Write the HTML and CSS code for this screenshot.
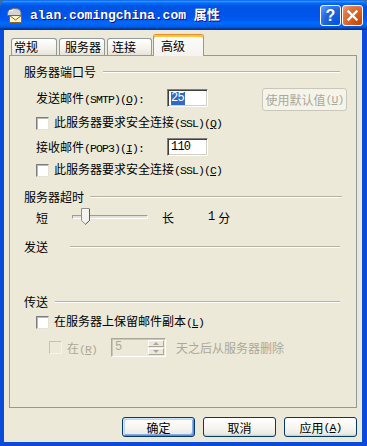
FILE: index.html
```html
<!DOCTYPE html>
<html>
<head>
<meta charset="utf-8">
<link rel="stylesheet" href="styles.css">
</head>
<body>
<div class="win">
  <div class="titlebar">
    <svg class="appicon" width="17" height="17" viewBox="0 0 17 17">
      <path d="M1.5 8.5 Q1 3 5 2.5 Q7 0.5 10 1.5 Q14.5 1.5 15 5.5 L15 8.5 Z" fill="#D4D4D4" stroke="#6E6E6E"/>
      <path d="M3 4 Q5 3 7 3.5" fill="none" stroke="#FFFFFF"/>
      <rect x="3.5" y="8.5" width="12" height="7" fill="#FFF4C8" stroke="#8A6326"/>
      <path d="M3.5 8.5 L9.5 13 L15.5 8.5" fill="none" stroke="#8A6326"/>
    </svg>
    <span class="title"><span class="tmono">alan.comingchina.com </span>属性</span>
    <div class="tbtns">
      <div class="tb help">?</div>
      <div class="tb close">
        <svg width="13" height="13" viewBox="0 0 13 13"><path d="M2.5 2.5 L10.5 10.5 M10.5 2.5 L2.5 10.5" stroke="#fff" stroke-width="2.4" stroke-linecap="square"/></svg>
      </div>
    </div>
  </div>
  <div class="body">
    <div class="tabs">
      <div class="tab t1">常规</div>
      <div class="tab t2">服务器</div>
      <div class="tab t3">连接</div>
      <div class="tab sel">高级</div>
    </div>
    <div class="panel">
      <div class="hdr hd1"><span>服务器端口号</span><i class="line"></i></div>

      <div class="frow r-smtp">
        <span class="flabel">发送邮件<span class="l">(SMTP)(<u>O</u>):</span></span>
        <div class="field"><span class="selt l">25</span></div>
        <div class="btn dis-btn">使用默认值<span class="l">(<u>U</u>)</span></div>
      </div>

      <div class="cbrow cb1"><span class="cb"></span><span class="cbt">此服务器要求安全连接<span class="l">(SSL)(<u>Q</u>)</span></span></div>

      <div class="frow r-pop">
        <span class="flabel">接收邮件<span class="l">(POP3)(<u>I</u>):</span></span>
        <div class="field"><span class="l">110</span></div>
      </div>

      <div class="cbrow cb2"><span class="cb"></span><span class="cbt">此服务器要求安全连接<span class="l">(SSL)(<u>C</u>)</span></span></div>

      <div class="hdr hd2"><span>服务器超时</span><i class="line"></i></div>

      <div class="slrow">
        <span>短</span>
        <div class="track">
          <svg class="thumb" width="9" height="17" viewBox="0 0 9 17">
            <path d="M0.5 0.5 H8.5 V12.5 L4.5 16.3 L0.5 12.5 Z" fill="#F4F3EE" stroke="#8E8F8F"/>
            <path d="M8.5 1 V12.5 L4.5 16.3" fill="none" stroke="#5E5E5E"/>
            <path d="M1.5 1.5 H7.5" stroke="#FFFFFF"/>
          </svg>
        </div>
        <span class="chang">长</span>
        <span class="one l">1</span>
        <span class="fen">分</span>
      </div>

      <div class="hdr hd3"><span>发送</span><i class="line"></i></div>

      <div class="hdr hd4"><span>传送</span><i class="line"></i></div>

      <div class="cbrow cb3"><span class="cb"></span><span class="cbt">在服务器上保留邮件副本<span class="l">(<u>L</u>)</span></span></div>

      <div class="disrow">
        <span class="cb cbdis"></span>
        <span class="dlabel">在<span class="l">(<u>R</u>)</span></span>
        <div class="spin">
          <span class="l spinval">5</span>
          <div class="spinbtns">
            <div class="sb up"><i></i></div>
            <div class="sb down"><i></i></div>
          </div>
        </div>
        <span class="dtext">天之后从服务器删除</span>
      </div>
    </div>
    <div class="footer">
      <div class="btn pbtn def">确定</div>
      <div class="btn pbtn">取消</div>
      <div class="btn pbtn">应用<span class="l">(<u>A</u>)</span></div>
    </div>
  </div>
</div>
</body>
</html>
```

FILE: styles.css
```css
* { box-sizing: border-box; margin: 0; padding: 0; }
html, body { width: 367px; height: 446px; overflow: hidden; background: #3A6EA5; }
body {
  font-family: "Noto Sans CJK SC", "Noto Sans", sans-serif;
  font-size: 12px;
  color: #000;
}
u { text-decoration: underline; text-underline-offset: 1px; }
.l {
  font-family: "Liberation Mono", monospace;
  font-size: 11.5px;
  letter-spacing: -0.9px;
}

.win {
  width: 367px;
  height: 446px;
  display: flex;
  flex-direction: column;
  border-radius: 7px 7px 0 0;
  overflow: hidden;
}

/* title bar */
.titlebar {
  height: 30px;
  flex: none;
  display: flex;
  align-items: center;
  padding: 0 4px 0 6px;
  background: linear-gradient(to bottom, #0058EE 0%, #3593FF 4%, #288EFF 6%, #127DFF 8%, #036FFC 10%, #0262EE 14%, #0057E5 20%, #0054E3 24%, #0055EB 56%, #005BF5 66%, #026AFE 76%, #0062EF 86%, #0052D6 92%, #0040AB 94%, #003092 100%);
}
.appicon { flex: none; margin-top: 1px; }
.title {
  margin-left: 7px;
  color: #fff;
  font-weight: bold;
  font-size: 13px;
  text-shadow: 1px 1px 0 #0F1089;
  white-space: pre;
  line-height: 16px;
}
.tmono { font-family: "Liberation Mono", monospace; font-size: 13px; }
.tbtns { margin-left: auto; display: flex; gap: 1px; }
.tb {
  width: 21px;
  height: 21px;
  border: 1px solid #fff;
  border-radius: 3px;
  display: flex;
  align-items: center;
  justify-content: center;
}
.help {
  background: radial-gradient(circle at 90% 90%, #0054E9 0%, #2263D5 55%, #4482F6 80%, #6A9DF9 100%);
  color: #fff;
  font-family: "Liberation Sans", Arial, sans-serif;
  font-weight: bold;
  font-size: 16px;
  line-height: 19px;
}
.close {
  background: radial-gradient(circle at 90% 90%, #CC4600 0%, #DC6527 55%, #E5805A 80%, #F0A88A 100%);
}

/* body */
.body {
  flex: 1;
  background: #ECE9D8;
  border-style: solid;
  border-color: #0A4BDB;
  border-width: 0 5px 4px 4px;
  padding: 0 5px;
  display: flex;
  flex-direction: column;
}

.tabs {
  height: 25px;
  flex: none;
  display: flex;
  align-items: flex-end;
  padding-left: 2px;
}
.tab {
  flex: none;
  height: 17px;
  border: 1px solid #919B9C;
  border-bottom: none;
  border-radius: 3px 3px 0 0;
  background: linear-gradient(to bottom, #FFFFFF, #F3F2EC 60%, #E6E4D8);
  padding-left: 3px;
  line-height: 16px;
  white-space: nowrap;
}
.t1 { width: 46px; margin-right: 2px; padding-left: 2px; }
.t2 { width: 46px; margin-right: 2px; padding-left: 5px; }
.t3 { width: 45px; margin-right: 1px; padding-left: 4px; }
.sel {
  width: 51px;
  height: 22px;
  margin-bottom: -1px;
  position: relative;
  z-index: 1;
  padding-left: 7px;
  border-top: 1px solid #E68B2C;
  box-shadow: inset 0 2px 0 #FFC73C;
  background: linear-gradient(to bottom, #FCFCFE, #F4F3EE);
  line-height: 19px;
  padding-top: 1px;
}

.panel {
  height: 353px;
  flex: none;
  border: 1px solid #919B9C;
  background: #ECE9D8;
  padding: 0 16px 0 14px;
  display: flex;
  flex-direction: column;
}

/* section headers */
.hdr {
  height: 16px;
  display: flex;
  align-items: center;
  line-height: 16px;
  white-space: nowrap;
}
.line {
  flex: 1;
  height: 2px;
  border-top: 1px solid #B6B3A3;
  border-bottom: 1px solid #FFFFFF;
}
.hd1 { margin-top: 8px; }
.hd1 .line { margin-left: 7px; }
.hd2 { margin-top: 12px; }
.hd2 .line { margin-left: 6px; margin-right: -2px; }
.hd3 { margin-top: 12px; }
.hd3 .line { margin-left: 22px; }
.hd4 { margin-top: 39px; }
.hd4 .line { margin-left: 7px; }

/* field rows */
.frow {
  height: 20px;
  display: flex;
  align-items: flex-start;
  margin-left: 12px;
}
.frow > * { flex: none; }
.r-smtp { margin-top: 8px; }
.r-pop { margin-top: 7px; }
.flabel { width: 131px; line-height: 20px; white-space: nowrap; }
.field {
  width: 41px;
  height: 18px;
  margin-top: 1px;
  background: #fff;
  border-style: solid;
  border-width: 1px;
  border-color: #808080 #FFFFFF #FFFFFF #808080;
  box-shadow: inset 1px 1px 0 #404040, inset -1px -1px 0 #D4D0C8;
  padding: 0 0 0 3px;
  line-height: 16px;
  display: flex;
  align-items: center;
}
.field .l { font-size: 12px; letter-spacing: -0.8px; }
.selt { background: #316AC5; color: #fff; padding: 0 1px 0 0; line-height: 13px; }

.btn {
  border-radius: 3px;
  display: flex;
  align-items: center;
  justify-content: center;
  white-space: nowrap;
}
.dis-btn {
  margin-left: 54px;
  width: 85px;
  height: 23px;
  border: 1px solid #C9C7BA;
  background: #F5F4EA;
  color: #ACA899;
}

/* checkbox rows */
.cbrow {
  height: 14px;
  display: flex;
  align-items: center;
  margin-left: 12px;
  white-space: nowrap;
}
.cb1 { margin-top: 8px; }
.cb2 { margin-top: 6px; }
.cb3 { margin-top: 5px; }
.cb {
  width: 13px;
  height: 13px;
  flex: none;
  background: #fff;
  border-style: solid;
  border-width: 1px;
  border-color: #7D7D7D #E4E2D6 #E4E2D6 #7D7D7D;
  box-shadow: inset 1px 1px 0 #B8B8B8;
}
.cbt { margin-left: 5px; line-height: 14px; }

/* slider */
.slrow {
  height: 20px;
  margin-top: 2px;
  margin-left: 12px;
  display: flex;
  align-items: center;
  white-space: nowrap;
}
.slrow > * { flex: none; }
.track {
  position: relative;
  width: 76px;
  height: 4px;
  margin-left: 24px;
  border-style: solid;
  border-width: 1px;
  border-color: #9D9C99 #FFFFFF #FFFFFF #9D9C99;
  background: #E3E2DA;
}
.thumb { position: absolute; left: 8px; top: -8px; }
.chang { margin-left: 14px; }
.one { margin-left: 34px; font-size: 12px; }
.fen { margin-left: 4px; }

/* disabled row */
.disrow {
  height: 19px;
  margin-top: 9px;
  margin-left: 25px;
  display: flex;
  align-items: center;
  white-space: nowrap;
  color: #ACA899;
}
.disrow > * { flex: none; }
.cbdis {
  background: #ECE9D8;
  border-color: #C5C2B2 #F4F3EE #F4F3EE #C5C2B2;
  box-shadow: none;
}
.dlabel { width: 44px; margin-left: 5px; }
.spin {
  width: 55px;
  height: 19px;
  display: flex;
  border-style: solid;
  border-width: 1px;
  border-color: #ACA899 #FFFFFF #FFFFFF #ACA899;
  box-shadow: inset 1px 1px 0 #C9C7BA;
  background: #ECE9D8;
}
.spinval { flex: 1; padding-left: 3px; line-height: 17px; font-size: 12px; }
.spinbtns {
  width: 17px;
  display: flex;
  flex-direction: column;
  gap: 1px;
  padding: 1px 1px 1px 0;
}
.sb {
  flex: 1;
  border-style: solid;
  border-width: 1px;
  border-color: #FFFFFF #ACA899 #ACA899 #FFFFFF;
  display: flex;
  align-items: center;
  justify-content: center;
}
.sb i { width: 0; height: 0; border-left: 3px solid transparent; border-right: 3px solid transparent; }
.up i { border-bottom: 3px solid #ACA899; }
.down i { border-top: 3px solid #ACA899; }
.dtext { margin-left: 10px; }

/* footer */
.footer {
  flex: none;
  margin-top: 9px;
  display: flex;
  justify-content: flex-end;
  gap: 8px;
}
.pbtn {
  width: 73px;
  height: 20px;
  border: 1px solid #003C74;
  background: linear-gradient(to bottom, #FFFFFF 0%, #F7F6F2 50%, #ECEBE6 86%, #D6D0C5 100%);
  box-shadow: inset 0 -1px 0 #D6D0C5;
}
.def {
  box-shadow: inset 1px 1px 0 #CEE7FF, inset -1px -1px 0 #6982EE, inset 2px 2px 0 #BCD4F6, inset -2px -2px 0 #89ADE4;
}
```
